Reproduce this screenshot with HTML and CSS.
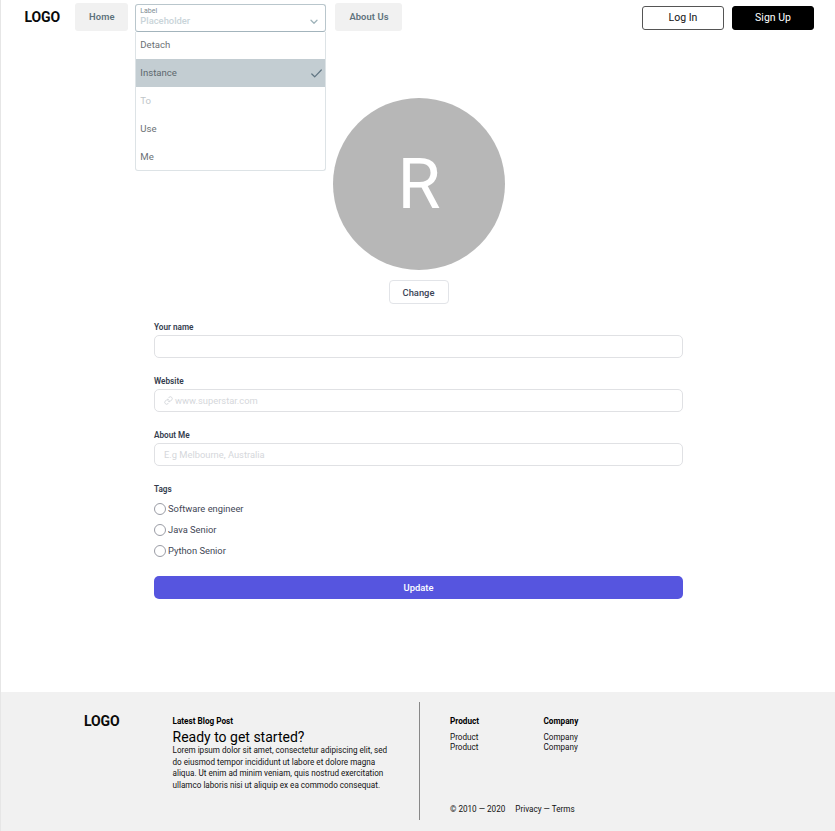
FILE: index.html
```html
<!DOCTYPE html>
<html lang="en">
<head>
<meta charset="utf-8">
<title>Profile</title>
<link rel="stylesheet" href="styles.css">
</head>
<body>
<div class="page">
  <header class="header">
    <div class="logo">LOGO</div>
    <nav class="nav">
      <a class="nav-link home">Home</a>
      <div class="select">
        <div class="select-box">
          <div class="select-text">
            <span class="select-label">Label</span>
            <span class="select-placeholder">Placeholder</span>
          </div>
          <svg class="chevron" viewBox="0 0 8 6"><path d="M1 1.2 4 4.2 7 1.2"/></svg>
        </div>
        <ul class="menu">
          <li>Detach</li>
          <li class="selected">Instance<svg class="check" viewBox="0 0 11 9"><path d="M.8 5 3.7 7.8 10.3 1"/></svg></li>
          <li class="disabled">To</li>
          <li>Use</li>
          <li>Me</li>
        </ul>
      </div>
      <a class="nav-link about">About Us</a>
    </nav>
    <div class="auth">
      <a class="auth-btn">Log In</a>
      <a class="auth-btn solid">Sign Up</a>
    </div>
  </header>

  <main class="profile">
    <div class="avatar"><span>R</span></div>
    <button class="change">Change</button>
    <form class="form">
      <div class="field">
        <label>Your name</label>
        <div class="input"></div>
      </div>
      <div class="field">
        <label>Website</label>
        <div class="input">
          <svg class="link" viewBox="0 0 24 24"><path d="M10 13a5 5 0 0 0 7.54.54l3-3a5 5 0 0 0-7.07-7.07l-1.72 1.71"/><path d="M14 11a5 5 0 0 0-7.54-.54l-3 3a5 5 0 0 0 7.07 7.07l1.71-1.71"/></svg>
          <span class="site">www.superstar.com</span>
        </div>
      </div>
      <div class="field">
        <label>About Me</label>
        <div class="input"><span class="place">E.g Melbourne, Australia</span></div>
      </div>
      <div class="tags">
        <label>Tags</label>
        <div class="radio"><i></i><span>Software engineer</span></div>
        <div class="radio"><i></i><span>Java Senior</span></div>
        <div class="radio"><i></i><span>Python Senior</span></div>
      </div>
      <button class="update" type="button">Update</button>
    </form>
  </main>

  <footer class="footer">
    <div class="logo footer-logo">LOGO</div>
    <section class="post">
      <h4>Latest Blog Post</h4>
      <h2>Ready to get started?</h2>
      <p>Lorem ipsum dolor sit amet, consectetur adipiscing elit, sed<br>do eiusmod tempor incididunt ut labore et dolore magna<br>aliqua. Ut enim ad minim veniam, quis nostrud exercitation<br>ullamco laboris nisi ut aliquip ex ea commodo consequat.</p>
    </section>
    <section class="links">
      <div class="columns">
        <div class="column"><h4>Product</h4><a>Product</a><a>Product</a></div>
        <div class="column"><h4>Company</h4><a>Company</a><a>Company</a></div>
      </div>
      <div class="legal"><span>© 2010 — 2020</span><span>Privacy — Terms</span></div>
    </section>
  </footer>
</div>
</body>
</html>
```
FILE: styles.css
```css
* { box-sizing: border-box; }
body { margin: 0; background: #fff; font-family: Roboto, "Liberation Sans", sans-serif; color: #000; }
button { font-family: inherit; padding: 0; }
h2, h4, p, ul { margin: 0; padding: 0; }
svg { fill: none; stroke-linecap: round; stroke-linejoin: round; }

.page { height: 831px; overflow: hidden; border-left: 1px solid #e6e6e6; display: flex; flex-direction: column; }

.header { height: 36px; padding: 3px 21.5px 0 23.5px; display: flex; flex: none; }
.logo { font-size: 14px; line-height: 29px; font-weight: 700; letter-spacing: -.1px; color: #0a0a0a; }
.header .logo { width: 50.8px; line-height: 28px; }
.nav { display: flex; align-items: flex-start; }
.nav-link { height: 28px; line-height: 28px; border-radius: 3px; background: #f1f1f1; color: #5d727c; font-size: 9.4px; font-weight: 600; letter-spacing: .1px; text-align: center; }
.home { width: 53px; }
.about { width: 66.5px; margin-left: 9px; padding-left: 1px; }
.select { position: relative; width: 191px; margin-left: 7px; }
.select-box { height: 28px; margin-top: 1px; padding: 2px 7px 0 4px; border: 1px solid #b9c6cc; border-bottom-color: #a3b4bc; border-radius: 3px; display: flex; justify-content: space-between; }
.select-text { display: flex; flex-direction: column; }
.select-label { font-size: 7px; line-height: 9px; color: #7d8b92; }
.select-placeholder { font-size: 9.4px; line-height: 10px; color: #c9d4d9; font-weight: 500; }
.chevron { width: 8px; height: 6px; margin-top: 12px; stroke: #9fb3ba; stroke-width: 1.3; }
.menu { position: absolute; top: 29px; left: 0; width: 191px; height: 139px; list-style: none; background: #fff; border: 1px solid #dde3e6; border-radius: 0 0 3px 3px; z-index: 2; border-top: 0; }
.menu li { height: 28px; line-height: 28px; padding: 0 3px 0 4px; font-size: 9.6px; color: #6b7175; display: flex; align-items: center; justify-content: space-between; }
.menu li:first-child { height: 27px; line-height: 25px; padding-bottom: 2px; }
.menu .selected { background: #c3cdd2; color: #5d686e; }
.menu .disabled { color: #c0c6c9; }
.check { width: 11px; height: 9px; stroke: #607582; stroke-width: 1.2; }
.auth { display: flex; gap: 8px; margin-left: auto; padding-top: 3px; }
.auth-btn { width: 82px; height: 24px; line-height: 22px; border: 1px solid #555; border-radius: 3px; text-align: center; font-size: 10.5px; color: #111; padding-left: 1px; }
.solid { background: #000; border-color: #000; color: #fff; }

.profile { flex: none; height: 656px; padding: 62px 0 0 1px; display: flex; flex-direction: column; align-items: center; }
.avatar { width: 172px; height: 172px; border-radius: 50%; background: #b7b7b7; color: #fff; font-size: 70px; line-height: 172px; text-align: center; padding-left: 1px; }
.change { width: 60px; height: 24px; margin-top: 10px; border: 1px solid #e2e4e8; border-radius: 4px; background: #fff; color: #3b4457; font-size: 9.4px; font-weight: 500; }
.form { width: 529px; margin-top: 18px; }
.field { height: 54px; }
label { display: block; height: 13px; line-height: 11px; font-size: 8.2px; font-weight: 600; color: #333c4d; }
.input { height: 23px; border: 1px solid #e0e1e4; border-radius: 5px; padding: 0 0 1px 9px; display: flex; align-items: center; font-size: 9.35px; color: #d5d7db; }
.link { width: 9px; height: 9px; margin-right: 2px; stroke: #cfd2d7; stroke-width: 2.2; }
.tags { height: 92px; }
.tags label { height: 14px; }
.radio { height: 21px; display: flex; align-items: center; gap: 2px; font-size: 9.35px; color: #3f4756; }
.radio span { margin-top: -1px; }
.radio i { width: 12px; height: 12px; border: 1px solid #9a9ca5; border-radius: 50%; }
.update { display: block; width: 529px; height: 23px; border: 0; border-radius: 5px; background: #5655df; color: #fff; font-size: 9.4px; font-weight: 500; }

.footer { flex: 1; background: #f1f1f1; display: flex; }
.footer-logo { width: 171.5px; padding: 15px 0 0 83px; }
.post { width: 246.5px; padding-top: 24px; }
h4 { font-size: 8.2px; line-height: 11px; font-weight: 700; }
h2 { font-size: 14px; line-height: 18px; margin-top: 1px; font-weight: 400; }
.post p { margin-top: -1px; font-size: 8.14px; line-height: 11.5px; color: #111; white-space: nowrap; }
.links { margin: 10px 0 11px; padding-left: 30px; border-left: 1px solid #888; display: flex; flex-direction: column; justify-content: space-between; }
.columns { display: flex; padding-top: 14px; }
.column { width: 93.5px; display: flex; flex-direction: column; }
.column h4 { margin-bottom: 5px; }
.column a { font-size: 8.15px; line-height: 10.4px; color: #111; }
.legal { display: flex; gap: 10px; margin-bottom: 5px; font-size: 8.15px; line-height: 11px; color: #111; }
```
